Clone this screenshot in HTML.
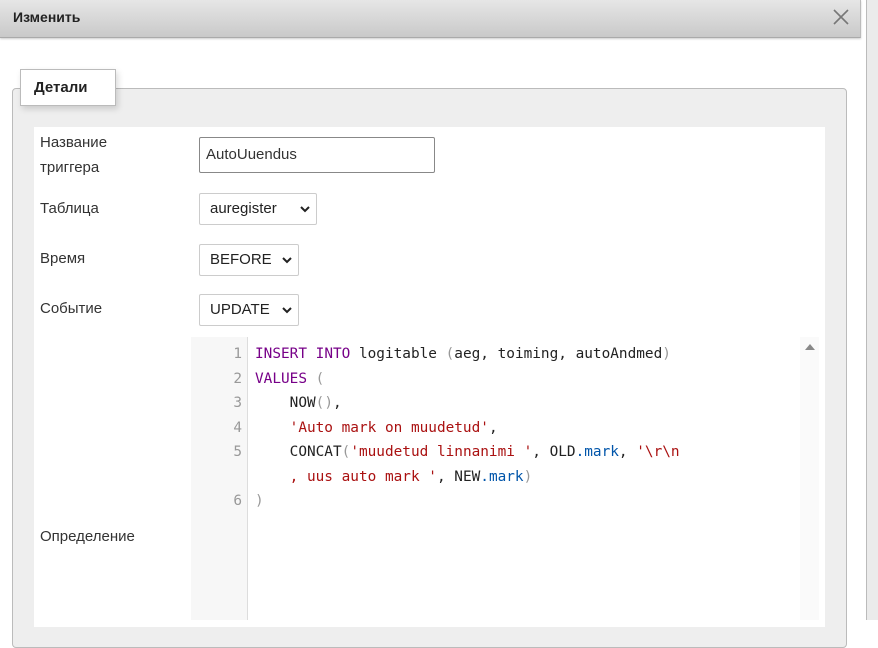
<!DOCTYPE html>
<html><head><meta charset="utf-8"><style>
*{box-sizing:border-box}
body{margin:0;width:878px;height:620px;overflow:hidden;background:#fff;font-family:"Liberation Sans","DejaVu Sans",sans-serif;position:relative}
.a{position:absolute}
.hdr{left:0;top:0;width:861px;height:38px;background:linear-gradient(#e6e6e6,#c9c9c9);border-bottom:1px solid #aaa;border-right:1px solid #bbb;box-shadow:0 1px 2px rgba(0,0,0,.2)}
.hdr b{position:absolute;left:13px;top:9px;font-size:14px;color:#222}
.lbl{font-size:15px;color:#333;line-height:25px}
.sel{border:1px solid #ccc;border-radius:2px;background:#fff;font-size:15px;color:#222;padding-left:10px;line-height:30px}
.sel svg{position:absolute;right:6px;top:12px}
.code{font-family:"DejaVu Sans Mono","Liberation Mono",monospace;font-size:14.4px;line-height:24.5px;white-space:pre}
.k{color:#708}.s{color:#a11}.v{color:#05a}.p{color:#999}.t{color:#222}
.ln{color:#999;text-align:right;width:55px;padding-right:4px}
</style></head><body>
<div class="a hdr"><b>Изменить</b>
<svg class="a" style="left:832px;top:8px" width="18" height="18"><path d="M2 2L16 16M16 2L2 16" stroke="#777" stroke-width="1.6"/></svg></div>
<div class="a" style="left:866px;top:0;width:12px;height:620px;background:#ebebeb;border-left:1px solid #bbb"></div>
<div class="a" style="left:12px;top:88px;width:835px;height:560px;background:#eee;border:1px solid #bbb;border-radius:4px"></div>
<div class="a" style="left:20px;top:69px;width:96px;height:37px;background:#fff;border:1px solid #bbb;box-shadow:2px 3px 6px rgba(0,0,0,.15);font-weight:bold;font-size:15px;padding:9px 0 0 13px;color:#222">Детали</div>
<div class="a" style="left:34px;top:127px;width:791px;height:500px;background:#fff"></div>
<div class="a lbl" style="left:40px;top:130px">Название<br>триггера</div>
<div class="a lbl" style="left:40px;top:196px">Таблица</div>
<div class="a lbl" style="left:40px;top:246px">Время</div>
<div class="a lbl" style="left:40px;top:296px">Событие</div>
<div class="a lbl" style="left:40px;top:524px">Определение</div>
<div class="a" style="left:199px;top:137px;width:236px;height:36px;border:1px solid #888;border-radius:2px;font-size:15px;color:#333;padding:8px 0 0 6px">AutoUuendus</div>
<div class="a sel" style="left:199px;top:193px;width:118px;height:32px">auregister<svg width="10" height="7"><path d="M1 1L5 5L9 1" stroke="#222" stroke-width="2" fill="none"/></svg></div>
<div class="a sel" style="left:199px;top:244px;width:100px;height:32px">BEFORE<svg width="10" height="7"><path d="M1 1L5 5L9 1" stroke="#222" stroke-width="2" fill="none"/></svg></div>
<div class="a sel" style="left:199px;top:294px;width:100px;height:32px">UPDATE<svg width="10" height="7"><path d="M1 1L5 5L9 1" stroke="#222" stroke-width="2" fill="none"/></svg></div>
<div class="a" style="left:191px;top:337px;width:57px;height:283px;background:#f7f7f7;border-right:1px solid #ddd"></div>
<div class="a" style="left:800px;top:337px;width:19px;height:283px;background:#fafafa"></div>
<div class="a" style="left:805px;top:344px;width:0;height:0;border-left:5px solid transparent;border-right:5px solid transparent;border-bottom:6px solid #888"></div>
<div class="a code ln" style="left:191px;top:342px">1
2
3
4
5

6</div>
<div class="a code t" style="left:255px;top:342px"><span class="k">INSERT</span> <span class="k">INTO</span> logitable <span class="p">(</span>aeg, toiming, autoAndmed<span class="p">)</span>
<span class="k">VALUES</span> <span class="p">(</span>
    NOW<span class="p">()</span>,
    <span class="s">'Auto mark on muudetud'</span>,
    CONCAT<span class="p">(</span><span class="s">'muudetud linnanimi '</span>, OLD<span class="v">.mark</span>, <span class="s">'\r\n</span>
<span class="s">    , uus auto mark '</span>, NEW<span class="v">.mark</span><span class="p">)</span>
<span class="p">)</span></div>
</body></html>
